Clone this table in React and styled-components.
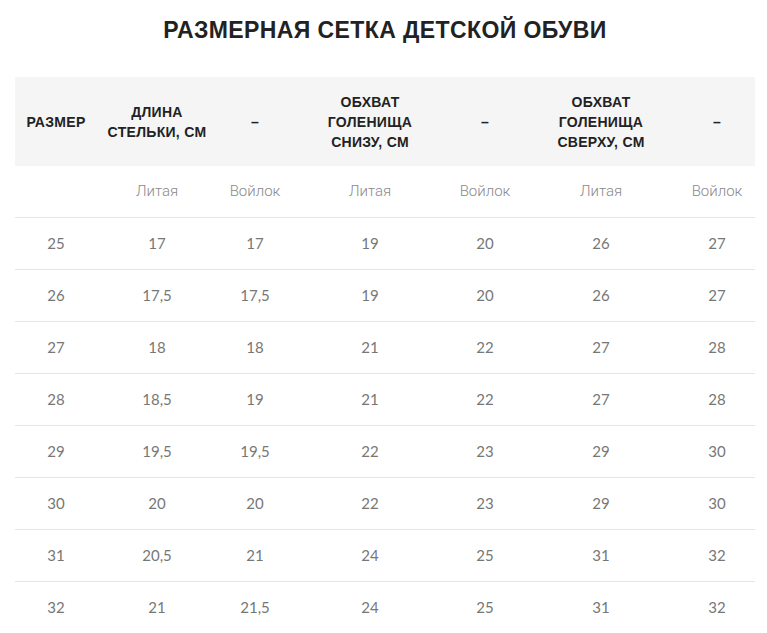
import React from "react";
import styled, { createGlobalStyle } from "styled-components";

const Global = createGlobalStyle`
  html, body { margin: 0; padding: 0; background: #fff; }
  body { font-family: Lato, "Liberation Sans", sans-serif; }
`;

const Page = styled.div`
  padding: 0 12px 0 15px;
`;

const Title = styled.h2`
  margin: 0;
  padding: 15px 0 0;
  height: 77px;
  box-sizing: border-box;
  text-align: center;
  font-family: "Liberation Sans", Arial, sans-serif;
  font-weight: 700;
  font-size: 23px;
  line-height: 30px;
  letter-spacing: 0.4px;
  color: #222;
  text-transform: uppercase;
`;

const Table = styled.table`
  width: 740px;
  border-collapse: collapse;
  table-layout: fixed;
`;

const HeadRow = styled.tr`
  background: #f5f5f5;
  height: 89px;
`;

const Th = styled.th`
  font-family: "Liberation Sans", Arial, sans-serif;
  font-weight: 700;
  font-size: 14px;
  line-height: 20px;
  letter-spacing: 0.3px;
  color: #222;
  text-align: center;
  vertical-align: middle;
  padding: 0 2px;
  text-transform: uppercase;
`;

const SubRow = styled.tr`
  height: 51px;
  border-bottom: 1px solid #e6e6e6;
`;

const SubCell = styled.td`
  font-family: Roboto, "Liberation Sans", sans-serif;
  font-weight: 300;
  font-size: 15px;
  color: #8a8a8a;
  text-align: center;
  vertical-align: middle;
  padding-bottom: 1px;
`;

const Row = styled.tr`
  height: 52px;
  border-bottom: ${(p) => (p.$last ? "none" : "1px solid #e6e6e6")};
`;

const Td = styled.td`
  font-family: Lato, "Liberation Sans", sans-serif;
  font-size: 15px;
  color: #777;
  text-align: center;
  vertical-align: middle;
`;

const widths = [82, 120, 76, 154, 76, 156, 76];

const headers = [
  ["Размер"],
  ["Длина", "стельки, см"],
  ["–"],
  ["Обхват", "голенища", "снизу, см"],
  ["–"],
  ["Обхват", "голенища", "сверху, см"],
  ["–"],
];

const sub = ["", "Литая", "Войлок", "Литая", "Войлок", "Литая", "Войлок"];

const rows = [
  ["25", "17", "17", "19", "20", "26", "27"],
  ["26", "17,5", "17,5", "19", "20", "26", "27"],
  ["27", "18", "18", "21", "22", "27", "28"],
  ["28", "18,5", "19", "21", "22", "27", "28"],
  ["29", "19,5", "19,5", "22", "23", "29", "30"],
  ["30", "20", "20", "22", "23", "29", "30"],
  ["31", "20,5", "21", "24", "25", "31", "32"],
  ["32", "21", "21,5", "24", "25", "31", "32"],
];

export default function App() {
  return (
    <Page>
      <Global />
      <Title>Размерная сетка детской обуви</Title>
      <Table>
        <colgroup>
          {widths.map((w, i) => (
            <col key={i} style={{ width: w }} />
          ))}
        </colgroup>
        <thead>
          <HeadRow>
            {headers.map((h, i) => (
              <Th key={i}>
                {h.map((l, j) => (
                  <React.Fragment key={j}>
                    {j > 0 && <br />}
                    {l}
                  </React.Fragment>
                ))}
              </Th>
            ))}
          </HeadRow>
        </thead>
        <tbody>
          <SubRow>
            {sub.map((s, i) => (
              <SubCell key={i}>{s}</SubCell>
            ))}
          </SubRow>
          {rows.map((r, i) => (
            <Row key={i} $last={i === rows.length - 1}>
              {r.map((c, j) => (
                <Td key={j}>{c}</Td>
              ))}
            </Row>
          ))}
        </tbody>
      </Table>
    </Page>
  );
}
